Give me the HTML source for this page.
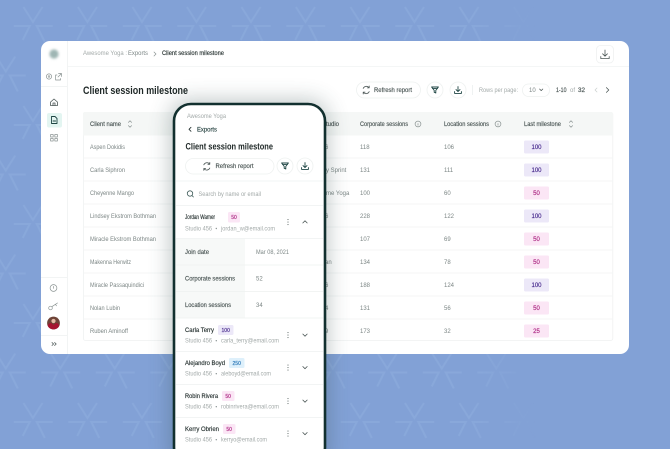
<!DOCTYPE html>
<html lang="en"><head><meta charset="utf-8"><title>Client session milestone</title>
<style>
html,body{margin:0;padding:0;width:670px;height:449px;overflow:hidden;background:#82a1d6}
svg{display:block;filter:blur(.25px)}
text{font-family:"Liberation Sans",sans-serif;font-size:6px;fill:#7f8988}
.d{fill:#2b3635;font-weight:700}
.l{fill:#a3aaa9}
.g{fill:#7c8685}
.n{fill:#4d5857;stroke:#4d5857;stroke-width:.16}
.pu{fill:#4a2d8f;stroke:#4a2d8f;stroke-width:.16;text-anchor:middle}
.pk{fill:#ad2a84;stroke:#ad2a84;stroke-width:.16;text-anchor:middle}
.bl{fill:#2b78b8;stroke:#2b78b8;stroke-width:.16;text-anchor:middle}
.i{fill:none;stroke:#4d5857;stroke-width:.8;stroke-linecap:round;stroke-linejoin:round}
.i2{fill:none;stroke:#8a9392;stroke-width:.7;stroke-linecap:round;stroke-linejoin:round}
.k{fill:none;stroke:#1f4644;stroke-width:.9;stroke-linecap:round;stroke-linejoin:round}
.ln{stroke:#eef1f0;stroke-width:.8}
</style></head><body>
<svg width="670" height="449" viewBox="0 0 670 449" xmlns="http://www.w3.org/2000/svg">
<defs>
<pattern id="pt" width="54.5" height="99" patternUnits="userSpaceOnUse" patternTransform="translate(5.75 1)">
<g fill="none" stroke="#89a8da" stroke-width="2">
<path d="M17.7 6 27.2 21 36.7 6M8 25H24L17 39M47 25H31L39 41"/>
<path d="M-9.5 55.5 0 70.5 9.5 55.5M-19 74.5H-3L-10 88.5M20 74.5H4L12 90.5"/>
<path d="M45 55.5 54.5 70.5 64 55.5M35.5 74.5H51.5L44.5 88.5M74.5 74.5H58.5L66.5 90.5"/>
</g>
</pattern>
<linearGradient id="fd" x1="0" x2="1" y1="0" y2="0"><stop offset="0" stop-color="#fff"/><stop offset=".7" stop-color="#fff"/><stop offset=".8" stop-color="#000"/></linearGradient>
<mask id="mk"><rect width="670" height="449" fill="url(#fd)"/></mask>
<filter id="bl" x="-30%" y="-30%" width="160%" height="160%"><feGaussianBlur stdDeviation="11"/></filter>
<filter id="b2" x="-50%" y="-50%" width="200%" height="200%"><feGaussianBlur stdDeviation="1.4"/></filter>
</defs>

<rect width="670" height="449" fill="#82a1d6"/>
<rect width="670" height="449" fill="url(#pt)" mask="url(#mk)"/>

<!-- main card -->
<rect x="41" y="41" width="588" height="313" rx="9" fill="#fff"/>
<path d="M67.5 41V354" stroke="#eff1f1" stroke-width=".8"/>
<path d="M67.5 66.5H629" stroke="#f1f3f3" stroke-width=".8"/>

<!-- sidebar -->
<circle cx="54" cy="54" r="4.6" fill="#9fb6b4" filter="url(#b2)"/>
<circle cx="49" cy="76.5" r="2.6" class="i2"/><circle cx="49" cy="76.5" r=".8" class="i2"/>
<path d="M57 75H55.6V80H60.5V78.5M58.5 73.5H61.5V76.5M61.5 73.5 58 77" class="i2"/>
<path d="M41 86.5H67" class="ln"/>
<path d="M50.6 102 54 99 57.4 102V105.6H50.6ZM53 105.6V103H55V105.6" class="i"/>
<rect x="47" y="113" width="15" height="14.5" rx="2" fill="#e3f5f1"/>
<path d="M51.5 116.5H55L57 118.5V123.5H51.5ZM53 121H55.6" class="k"/>
<path d="M50.6 134.5H53.2V137H50.6ZM54.8 134.5H57.4V137H54.8ZM50.6 138.5H53.2V141H50.6ZM54.8 138.5H57.4V141H54.8Z" class="i2"/>
<path d="M41 277.5H67" class="ln"/>
<circle cx="53.5" cy="288" r="3.4" class="i2"/><path d="M53.5 286.4V288.4" class="i2"/>
<circle cx="50.5" cy="308" r="1.8" class="i2"/><path d="M52 306.6 57.5 303M55.5 304.4 56.5 305.8" class="i2"/>
<circle cx="53.5" cy="323" r="6.4" fill="#6e4438"/>
<path d="M47.6 325.6C49 322.6 51 321.8 53.5 325 56 321.8 58 322.6 59.4 325.6 58.4 328 56 329.4 53.5 329.4 51 329.4 48.6 328 47.6 325.6Z" fill="#a5142f"/>
<circle cx="53.5" cy="321" r="2.1" fill="#e5b9a4"/>
<path d="M41 335.5H67" class="ln"/>
<path d="M52 342.6 53.6 344 52 345.4M54.6 342.6 56.2 344 54.6 345.4" class="i"/>

<!-- breadcrumb -->
<text x="83" y="55" class="l" textLength="44" lengthAdjust="spacingAndGlyphs">Awesome Yoga :</text>
<text x="128" y="55" class="g" textLength="20" lengthAdjust="spacingAndGlyphs">Exports</text>
<path d="M154 52 156 54 154 56" class="i2"/>
<text x="162" y="55" class="n" style="fill:#2b3635;stroke:#2b3635" textLength="62" lengthAdjust="spacingAndGlyphs">Client session milestone</text>
<rect x="596.5" y="45.5" width="17" height="17.5" rx="4" fill="#fff" stroke="#eff1f1" stroke-width=".8"/>
<path d="M605 50V56M602.6 53.8 605 56.2 607.4 53.8M600.8 56.5V58.6H609.2V56.5" class="i"/>

<!-- title -->
<text x="83" y="94" class="d" style="font-size:11px;fill:#1e2726" textLength="105" lengthAdjust="spacingAndGlyphs">Client session milestone</text>

<!-- toolbar -->
<rect x="356.5" y="82" width="64" height="16" rx="8" fill="#fff" stroke="#eef1f0" stroke-width=".8"/>
<path d="M363.2 88.4A3.4 3.4 0 0 1 369 87.6M369.2 91.6A3.4 3.4 0 0 1 363.4 92.4M369.2 86V87.9H367.3M363.2 94V92.1H365.1" class="i"/>
<text x="374" y="92" class="n" textLength="38" lengthAdjust="spacingAndGlyphs">Refresh report</text>
<circle cx="435" cy="90" r="8" fill="#fff" stroke="#eef1f0" stroke-width=".8"/>
<path d="M431.6 87H438.4L435.8 90.4V93L434.2 92.2V90.4ZM432.6 88.6H437.4" class="k"/>
<circle cx="458" cy="90" r="8" fill="#fff" stroke="#eef1f0" stroke-width=".8"/>
<path d="M458 86.6V91.4M456 89.6 458 91.6 460 89.6M454.6 91.6V93.4H461.4V91.6" class="k"/>
<path d="M472.5 85V95" stroke="#e8ecec" stroke-width=".7"/>
<text x="479" y="92" class="l" textLength="39" lengthAdjust="spacingAndGlyphs">Rows per page:</text>
<rect x="522.5" y="84" width="27" height="12.5" rx="6" fill="#fff" stroke="#eef1f0" stroke-width=".8"/>
<text x="529" y="92" class="g">10</text>
<path d="M539.6 89 541.2 90.6 542.8 89" class="i"/>
<text x="556" y="92" class="n" textLength="10.5" lengthAdjust="spacingAndGlyphs">1-10</text>
<text x="570" y="92" class="l">of</text>
<text x="578" y="92" class="n" textLength="7" lengthAdjust="spacingAndGlyphs">32</text>
<path d="M597 88 595 90 597 92" class="i2" style="stroke:#c9cfce"/>
<path d="M606.4 87.6 608.8 90 606.4 92.4" class="i"/>

<!-- table -->
<rect x="83.4" y="112.4" width="529.4" height="228" rx="2" fill="#fff" stroke="#eff1f1" stroke-width=".8"/>
<path d="M83 114a2 2 0 0 1 2-2H611a2 2 0 0 1 2 2V135.5H83Z" fill="#f5f7f6"/>
<path d="M83 158H613M83 181H613M83 204H613M83 227H613M83 250H613M83 273H613M83 296H613M83 319H613" stroke="#f1f3f3" stroke-width=".7"/>

<text x="90" y="126" class="n" textLength="31" lengthAdjust="spacingAndGlyphs">Client name</text>
<path d="M128.4 122.4 130 120.8 131.6 122.4M128.4 125.6 130 127.2 131.6 125.6" class="i2"/>
<text x="326" y="126" class="n">tudio</text>
<text x="360" y="126" class="n" textLength="48" lengthAdjust="spacingAndGlyphs">Corporate sessions</text>
<circle cx="418" cy="124" r="2.9" class="i2"/><path d="M418 123.6V125.2" class="i2"/>
<text x="444" y="126" class="n" textLength="45" lengthAdjust="spacingAndGlyphs">Location sessions</text>
<circle cx="498" cy="124" r="2.9" class="i2"/><path d="M498 123.6V125.2" class="i2"/>
<text x="524" y="126" class="n" textLength="37" lengthAdjust="spacingAndGlyphs">Last milestone</text>
<path d="M569.4 122.4 571 120.8 572.6 122.4M569.4 125.6 571 127.2 572.6 125.6" class="i2"/>

<text x="90" y="149" class="g" textLength="35" lengthAdjust="spacingAndGlyphs">Aspen Dokidis</text>
<text x="90" y="172" class="g" textLength="35" lengthAdjust="spacingAndGlyphs">Carla Siphron</text>
<text x="90" y="195" class="g" textLength="44" lengthAdjust="spacingAndGlyphs">Cheyenne Mango</text>
<text x="90" y="218" class="g" textLength="66" lengthAdjust="spacingAndGlyphs">Lindsey Ekstrom Bothman</text>
<text x="90" y="241" class="g" textLength="66" lengthAdjust="spacingAndGlyphs">Miracle Ekstrom Bothman</text>
<text x="90" y="264" class="g" textLength="41" lengthAdjust="spacingAndGlyphs">Makenna Herwitz</text>
<text x="90" y="287" class="g" textLength="54" lengthAdjust="spacingAndGlyphs">Miracle Passaquindici</text>
<text x="90" y="310" class="g" textLength="30" lengthAdjust="spacingAndGlyphs">Nolan Lubin</text>
<text x="90" y="333" class="g" textLength="38" lengthAdjust="spacingAndGlyphs">Ruben Aminoff</text>

<text x="325" y="149" class="g">6</text>
<text x="326" y="172" class="g">y Sprint</text>
<text x="326" y="195" class="g">me Yoga</text>
<text x="325" y="218" class="g">6</text>
<text x="325" y="264" class="g">an</text>
<text x="325" y="287" class="g">6</text>
<text x="325" y="310" class="g">4</text>
<text x="325" y="333" class="g">9</text>

<text x="360" y="149" class="g">118</text><text x="444" y="149" class="g">106</text>
<text x="360" y="172" class="g">131</text><text x="444" y="172" class="g">111</text>
<text x="360" y="195" class="g">100</text><text x="444" y="195" class="g">60</text>
<text x="360" y="218" class="g">228</text><text x="444" y="218" class="g">122</text>
<text x="360" y="241" class="g">107</text><text x="444" y="241" class="g">69</text>
<text x="360" y="264" class="g">134</text><text x="444" y="264" class="g">78</text>
<text x="360" y="287" class="g">188</text><text x="444" y="287" class="g">124</text>
<text x="360" y="310" class="g">131</text><text x="444" y="310" class="g">56</text>
<text x="360" y="333" class="g">173</text><text x="444" y="333" class="g">32</text>

<rect x="524" y="140.5" width="25" height="13" rx="1.5" fill="#ece8f8"/><text x="536.5" y="149" class="pu">100</text>
<rect x="524" y="163.5" width="25" height="13" rx="1.5" fill="#ece8f8"/><text x="536.5" y="172" class="pu">100</text>
<rect x="524" y="186.5" width="25" height="13" rx="1.5" fill="#fbe6f5"/><text x="536.5" y="195" class="pk">50</text>
<rect x="524" y="209.5" width="25" height="13" rx="1.5" fill="#ece8f8"/><text x="536.5" y="218" class="pu">100</text>
<rect x="524" y="232.5" width="25" height="13" rx="1.5" fill="#fbe6f5"/><text x="536.5" y="241" class="pk">50</text>
<rect x="524" y="255.5" width="25" height="13" rx="1.5" fill="#fbe6f5"/><text x="536.5" y="264" class="pk">50</text>
<rect x="524" y="278.5" width="25" height="13" rx="1.5" fill="#ece8f8"/><text x="536.5" y="287" class="pu">100</text>
<rect x="524" y="301.5" width="25" height="13" rx="1.5" fill="#fbe6f5"/><text x="536.5" y="310" class="pk">50</text>
<rect x="524" y="324.5" width="25" height="13" rx="1.5" fill="#fbe6f5"/><text x="536.5" y="333" class="pk">25</text>

<!-- phone shadow -->
<rect x="170" y="100" width="158" height="370" rx="18" fill="#2d4a48" opacity=".3" filter="url(#bl)"/>

<!-- phone -->
<rect x="174" y="104" width="151" height="360" rx="17" fill="#fff" stroke="#12302f" stroke-width="2.6"/>

<text x="187" y="118" class="l" textLength="39" lengthAdjust="spacingAndGlyphs">Awesome Yoga</text>
<path d="M191 127.3 189 129.300 191 131.3" class="i" style="stroke:#1e2b2a"/>
<text x="197" y="131.3" class="n" style="fill:#2f4a49;stroke:#2f4a49" textLength="20" lengthAdjust="spacingAndGlyphs">Exports</text>
<text x="185.5" y="149.5" class="d" style="font-size:9.5px;fill:#1e2726" textLength="87.5" lengthAdjust="spacingAndGlyphs">Client session milestone</text>

<rect x="185.5" y="158.5" width="88.5" height="15.5" rx="7.7" fill="#fff" stroke="#eef1f0" stroke-width=".8"/>
<path d="M203.8 164.8A3.4 3.4 0 0 1 209.6 164M209.8 168A3.4 3.4 0 0 1 204 168.8M209.8 162.4V164.3H207.9M203.8 170.4V168.5H205.7" class="i"/>
<text x="215.5" y="168.2" class="n" textLength="38" lengthAdjust="spacingAndGlyphs">Refresh report</text>
<circle cx="285" cy="166" r="8" fill="#fff" stroke="#eef1f0" stroke-width=".8"/>
<path d="M281.6 163H288.4L285.8 166.4V169L284.2 168.2V166.4ZM282.6 164.6H287.4" class="k"/>
<circle cx="305" cy="166" r="8" fill="#fff" stroke="#eef1f0" stroke-width=".8"/>
<path d="M305 162.6V167.4M303 165.6 305 167.6 307 165.6M301.6 167.6V169.4H308.4V167.6" class="k"/>
<path d="M176 181H323" class="ln"/>
<circle cx="190" cy="193.5" r="2.7" class="i" style="stroke:#3d5a58"/><path d="M192 195.5 193.4 197" class="i" style="stroke:#3d5a58"/>
<text x="198.5" y="196" class="l" textLength="62.5" lengthAdjust="spacingAndGlyphs">Search by name or email</text>
<path d="M176 205.5H323" class="ln"/>

<!-- Jordan -->
<text x="185" y="219" class="n" style="fill:#2b3635;stroke:#2b3635" textLength="30" lengthAdjust="spacingAndGlyphs">Jordan Warner</text>
<rect x="228" y="212" width="12" height="10.5" rx="1.5" fill="#fbe6f5"/><text x="234" y="219.2" class="pk" style="font-size:5px">50</text>
<text x="185" y="230.5" class="l" textLength="27" lengthAdjust="spacingAndGlyphs">Studio 456</text>
<circle cx="216.3" cy="228.5" r=".7" fill="#8a9392"/>
<text x="221" y="230.5" class="l" textLength="54" lengthAdjust="spacingAndGlyphs">jordan_w@email.com</text>
<path d="M288 219.5V219.6M288 222V222.1M288 224.5V224.6" stroke="#4d5857" stroke-width="1" stroke-linecap="round"/>
<path d="M302.8 223 305 220.8 307.2 223" class="i"/>
<path d="M176 238.500H323" class="ln"/>

<rect x="175.5" y="239" width="69.5" height="79" fill="#f7f9f8"/>
<path d="M176 265H323M176 291.5H323M176 318H323" class="ln"/>
<text x="185" y="254" class="n" textLength="24" lengthAdjust="spacingAndGlyphs">Join date</text>
<text x="256" y="254" class="g" textLength="33" lengthAdjust="spacingAndGlyphs">Mar 08, 2021</text>
<text x="185" y="280.5" class="n" textLength="50" lengthAdjust="spacingAndGlyphs">Corporate sessions</text>
<text x="256" y="280.5" class="g">52</text>
<text x="185" y="307" class="n" textLength="46" lengthAdjust="spacingAndGlyphs">Location sessions</text>
<text x="256" y="307" class="g">34</text>

<!-- Carla -->
<text x="185" y="332" class="n" style="fill:#2b3635;stroke:#2b3635" textLength="29" lengthAdjust="spacingAndGlyphs">Carla Terry</text>
<rect x="218" y="325" width="15.5" height="10" rx="1.5" fill="#ece8f8"/><text x="225.7" y="332" class="pu" style="font-size:5px">100</text>
<text x="185" y="342.7" class="l" textLength="27" lengthAdjust="spacingAndGlyphs">Studio 456</text>
<circle cx="216.3" cy="340.7" r=".7" fill="#8a9392"/>
<text x="221" y="342.7" class="l" textLength="58" lengthAdjust="spacingAndGlyphs">carla_terry@email.com</text>
<path d="M288 332.5V332.6M288 335V335.1M288 337.5V337.6" stroke="#4d5857" stroke-width="1" stroke-linecap="round"/>
<path d="M302.8 334 305 336.2 307.2 334" class="i"/>
<path d="M176 351.5H323" class="ln"/>

<!-- Alejandro -->
<text x="185" y="365" class="n" style="fill:#2b3635;stroke:#2b3635" textLength="40" lengthAdjust="spacingAndGlyphs">Alejandro Boyd</text>
<rect x="229" y="358" width="15.5" height="10" rx="1.5" fill="#def0fb"/><text x="236.7" y="365" class="bl" style="font-size:5px">250</text>
<text x="185" y="375.7" class="l" textLength="27" lengthAdjust="spacingAndGlyphs">Studio 456</text>
<circle cx="216.3" cy="373.7" r=".7" fill="#8a9392"/>
<text x="221" y="375.7" class="l" textLength="50" lengthAdjust="spacingAndGlyphs">aleboyd@email.com</text>
<path d="M288 365V365.1M288 367.5V367.6M288 370V370.1" stroke="#4d5857" stroke-width="1" stroke-linecap="round"/>
<path d="M302.8 366.5 305 368.7 307.2 366.5" class="i"/>
<path d="M176 384.5H323" class="ln"/>

<!-- Robin -->
<text x="185" y="398" class="n" style="fill:#2b3635;stroke:#2b3635" textLength="33" lengthAdjust="spacingAndGlyphs">Robin Rivera</text>
<rect x="222" y="391" width="12.5" height="10" rx="1.5" fill="#fbe6f5"/><text x="228.2" y="398" class="pk" style="font-size:5px">50</text>
<text x="185" y="408.7" class="l" textLength="27" lengthAdjust="spacingAndGlyphs">Studio 456</text>
<circle cx="216.3" cy="406.7" r=".7" fill="#8a9392"/>
<text x="221" y="408.7" class="l" textLength="58" lengthAdjust="spacingAndGlyphs">robinrivera@email.com</text>
<path d="M288 398.5V398.6M288 401V401.1M288 403.5V403.6" stroke="#4d5857" stroke-width="1" stroke-linecap="round"/>
<path d="M302.8 400 305 402.2 307.2 400" class="i"/>
<path d="M176 417.5H323" class="ln"/>

<!-- Kerry -->
<text x="185" y="431" class="n" style="fill:#2b3635;stroke:#2b3635" textLength="34" lengthAdjust="spacingAndGlyphs">Kerry Obrien</text>
<rect x="223" y="424" width="12.5" height="10" rx="1.5" fill="#fbe6f5"/><text x="229.2" y="431" class="pk" style="font-size:5px">50</text>
<text x="185" y="441.7" class="l" textLength="27" lengthAdjust="spacingAndGlyphs">Studio 456</text>
<circle cx="216.3" cy="439.7" r=".7" fill="#8a9392"/>
<text x="221" y="441.7" class="l" textLength="46" lengthAdjust="spacingAndGlyphs">kerryo@email.com</text>
<path d="M288 431V431.1M288 433.5V433.6M288 436V436.1" stroke="#4d5857" stroke-width="1" stroke-linecap="round"/>
<path d="M302.8 432.5 305 434.7 307.2 432.5" class="i"/>
</svg>
</body></html>
